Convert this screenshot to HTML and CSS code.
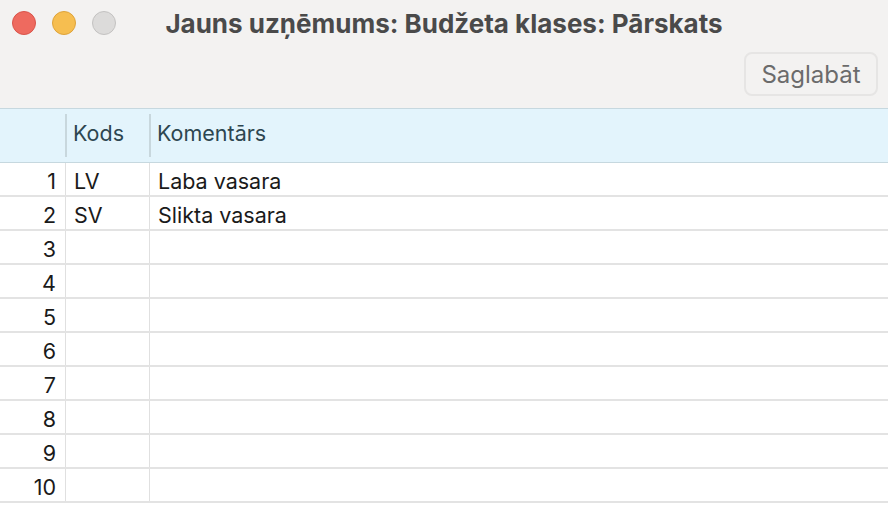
FILE: index.html
```html
<!DOCTYPE html>
<html lang="lv">
<head>
<meta charset="utf-8">
<link rel="stylesheet" href="styles.css">
</head>
<body>
<div class="window">
  <div class="toolbar">
    <div class="titlerow">
      <div class="lights">
        <span class="light red"></span>
        <span class="light yellow"></span>
        <span class="light gray"></span>
      </div>
      <div class="title">Jauns uzņēmums: Budžeta klases: Pārskats</div>
    </div>
    <div class="actions">
      <button class="btn">Saglabāt</button>
    </div>
  </div>
  <div class="table">
    <div class="head">
      <div class="hc num"></div>
      <div class="hc code"><span class="sep"></span>Kods</div>
      <div class="hc comment"><span class="sep"></span>Komentārs</div>
    </div>
    <div class="row"><div class="c num">1</div><div class="c code">LV</div><div class="c comment">Laba vasara</div></div>
    <div class="row"><div class="c num">2</div><div class="c code">SV</div><div class="c comment">Slikta vasara</div></div>
    <div class="row"><div class="c num">3</div><div class="c code"></div><div class="c comment"></div></div>
    <div class="row"><div class="c num">4</div><div class="c code"></div><div class="c comment"></div></div>
    <div class="row"><div class="c num">5</div><div class="c code"></div><div class="c comment"></div></div>
    <div class="row"><div class="c num">6</div><div class="c code"></div><div class="c comment"></div></div>
    <div class="row"><div class="c num">7</div><div class="c code"></div><div class="c comment"></div></div>
    <div class="row"><div class="c num">8</div><div class="c code"></div><div class="c comment"></div></div>
    <div class="row"><div class="c num">9</div><div class="c code"></div><div class="c comment"></div></div>
    <div class="row"><div class="c num">10</div><div class="c code"></div><div class="c comment"></div></div>
  </div>
</div>
</body>
</html>
```
FILE: styles.css
```css
* { box-sizing: border-box; }
html, body { margin: 0; padding: 0; }
body {
  width: 888px;
  height: 506px;
  overflow: hidden;
  background: #ffffff;
  font-family: Inter, "Noto Sans", sans-serif;
}
.window { width: 888px; height: 506px; overflow: hidden; }
.toolbar {
  height: 109px;
  background: #f3f2f1;
  border-bottom: 1px solid #c6d8df;
  display: flex;
  flex-direction: column;
}
.titlerow {
  height: 46px;
  display: flex;
  align-items: center;
  position: relative;
}
.lights {
  display: flex;
  gap: 16px;
  padding-left: 12px;
  position: absolute;
  left: 0;
  top: 11px;
}
.light {
  width: 24px;
  height: 24px;
  border-radius: 50%;
  display: block;
}
.red { background: #ee6a5f; border: 1px solid #d9544a; }
.yellow { background: #f6be50; border: 1px solid #dea33a; }
.gray { background: #dcdbda; border: 1px solid #c3c2c1; }
.title {
  flex: 1;
  text-align: center;
  font-size: 26px;
  font-weight: 700;
  color: #4a4a4a;
  padding-left: 0;
}
.actions {
  display: flex;
  justify-content: flex-end;
  padding-right: 10px;
  padding-top: 6px;
}
.btn {
  font-family: inherit;
  font-size: 24px;
  color: #6b6b6b;
  background: #f3f2f1;
  border: 2px solid #e6e5e4;
  border-radius: 8px;
  height: 44px;
  width: 134px;
  padding: 0;
}
.table { display: flex; flex-direction: column; }
.head {
  height: 54px;
  background: #e3f4fc;
  border-bottom: 1px solid #c6d8df;
  display: flex;
  align-items: stretch;
}
.hc {
  display: flex;
  align-items: center;
  font-size: 21.5px;
  color: #2d4650;
  padding-bottom: 5px;
  position: relative;
}
.sep {
  position: absolute;
  left: 0;
  top: 5px;
  bottom: 5px;
  width: 2px;
  background: #c8d7dd;
}
.num { width: 65px; }
.code { width: 84px; padding-left: 8px; }
.comment { flex: 1; padding-left: 8px; }
.row {
  height: 34px;
  display: flex;
  border-bottom: 2px solid #e3e3e3;
}
.c {
  font-size: 21.5px;
  color: #1a1a1a;
  display: flex;
  align-items: center;
  padding-top: 3px;
}
.row .num { justify-content: flex-end; padding-right: 9px; }
.row .code { border-left: 1px solid #e0e0e0; padding-left: 8px; }
.row .comment { border-left: 1px solid #e0e0e0; padding-left: 8px; }
```
